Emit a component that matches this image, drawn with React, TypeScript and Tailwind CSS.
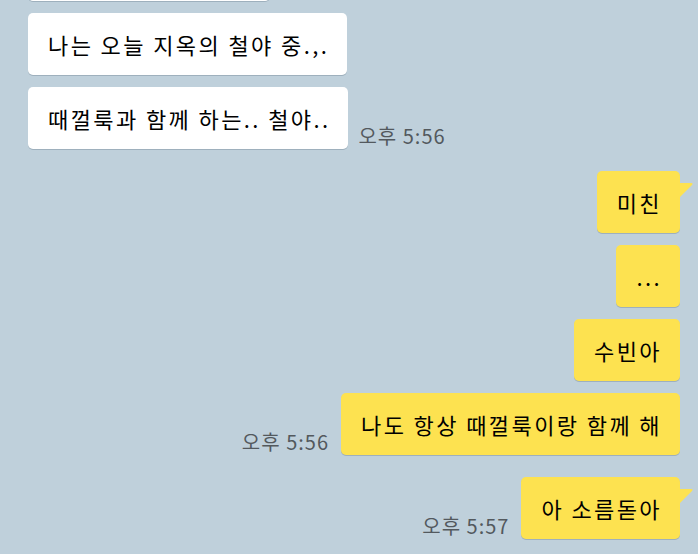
import type { JSX } from "react"

type Msg = {
  text: string
  mine: boolean
  time?: string
  tail?: boolean
  groupStart?: boolean
}

const messages: Msg[] = [
  { text: "나는 오늘 지옥의 철야 중.,.", mine: false },
  { text: "때껄룩과 함께 하는.. 철야..", mine: false, time: "오후 5:56" },
  { text: "미친", mine: true, tail: true, groupStart: true },
  { text: "...", mine: true },
  { text: "수빈아", mine: true },
  { text: "나도 항상 때껄룩이랑 함께 해", mine: true, time: "오후 5:56" },
  { text: "아 소름돋아", mine: true, time: "오후 5:57", tail: true, groupStart: true },
]

function Tail(): JSX.Element {
  return (
    <svg
      className="absolute left-full top-[12px]"
      width="13"
      height="14"
      viewBox="0 0 13 14"
    >
      <path d="M0 0 H11 Q13.5 0 12 2 L0 14 Z" fill="#fde250" />
    </svg>
  )
}

function Bubble({ msg }: { msg: Msg }): JSX.Element {
  return (
    <div
      className={
        msg.mine
          ? "relative rounded-[5px] bg-[#fde250] py-[15px] pl-5 pr-[18px] text-[22px] leading-[32px] tracking-[2.4px] text-black shadow-[0_1px_0_rgba(60,80,100,0.25)]"
          : "relative rounded-[5px] bg-white py-[15px] pl-5 pr-[18px] text-[22px] leading-[32px] tracking-[2.4px] text-black shadow-[0_1px_0_rgba(60,80,100,0.25)]"
      }
    >
      {msg.text}
      {msg.tail ? <Tail /> : null}
    </div>
  )
}

function Time({ value }: { value: string }): JSX.Element {
  return <span className="mb-[1px] text-[20px] leading-6 tracking-[1px] text-[#53595e]">{value}</span>
}

export default function App(): JSX.Element {
  return (
    <div
      className="h-[554px] w-[698px] overflow-hidden bg-[#bfd0db]"
      style={{ fontFamily: '"Noto Sans CJK KR", "Noto Sans", sans-serif' }}
    >
      <div className="flex flex-col gap-3 pl-[28px] pr-[18px]">
        {/* previous message, scrolled mostly out of view */}
        <div className="-mt-[61px] h-[62px] w-[242px] rounded-[5px] bg-white shadow-[0_1px_0_rgba(60,80,100,0.25)]" />
        {messages.map((m, i) => (
          <div
            key={i}
            className={
              m.mine
                ? m.groupStart
                  ? "mt-[10px] flex items-end justify-end gap-3"
                  : "flex items-end justify-end gap-3"
                : "flex items-end justify-start gap-[10px]"
            }
          >
            {m.mine && m.time ? <Time value={m.time} /> : null}
            <Bubble msg={m} />
            {!m.mine && m.time ? <Time value={m.time} /> : null}
          </div>
        ))}
      </div>
    </div>
  )
}
